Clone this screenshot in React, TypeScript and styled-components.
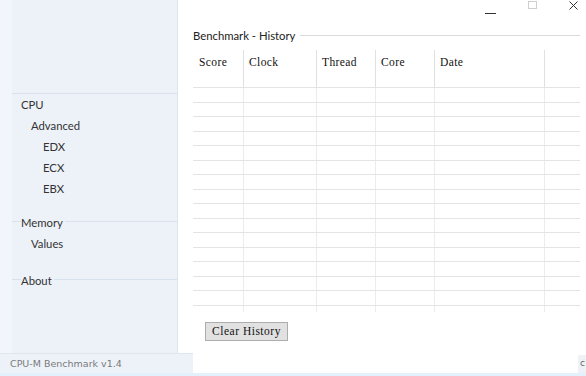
import React from 'react';
import styled, { createGlobalStyle } from 'styled-components';

const GlobalStyle = createGlobalStyle`
  html, body {
    margin: 0;
    padding: 0;
    background: #ffffff;
  }
  body {
    width: 586px;
    height: 376px;
    overflow: hidden;
    font-family: 'Segoe UI', Lato, 'Noto Sans', sans-serif;
  }
`;

interface NavItemProps {
  level: number;
}

interface GroupProps {
  gap: number;
}

const columns = [
  { label: 'Score', width: 51 },
  { label: 'Clock', width: 73 },
  { label: 'Thread', width: 59 },
  { label: 'Core', width: 59 },
  { label: 'Date', width: 110 },
  { label: '', width: 35 },
];

const ROWS = 15;

const App = () => {
  return (
    <Frame>
      <GlobalStyle />
      <Main>
        <Sidebar>
          <Panel>
            <Divider />
            <NavItem level={0}>CPU</NavItem>
            <NavItem level={1}>Advanced</NavItem>
            <NavItem level={2}>EDX</NavItem>
            <NavItem level={2}>ECX</NavItem>
            <NavItem level={2}>EBX</NavItem>
            <GroupTitle gap={13}>
              <span>Memory</span>
            </GroupTitle>
            <NavItem level={1}>Values</NavItem>
            <GroupTitle gap={16}>
              <span>About</span>
            </GroupTitle>
          </Panel>
        </Sidebar>
        <Content>
          <Controls>
            <svg width='11' height='16' viewBox='0 0 11 16'>
              <line x1='0' y1='13.5' x2='11' y2='13.5' stroke='#333' strokeWidth='1' />
            </svg>
            <svg width='9' height='16' viewBox='0 0 9 16'>
              <rect x='0.5' y='1.5' width='8' height='7' fill='none' stroke='#cfcfcf' strokeWidth='1' />
            </svg>
            <svg width='9' height='16' viewBox='0 0 9 16'>
              <path d='M0.5 1.5 L8.5 9.5 M8.5 1.5 L0.5 9.5' stroke='#333' strokeWidth='1' fill='none' />
            </svg>
          </Controls>
          <Legend>
            <span>Benchmark - History</span>
            <LegendLine />
          </Legend>
          <Grid>
            <HeadRow>
              {columns.map((c, i) => (
                <HeadCell key={i} style={{ width: c.width }}>
                  {c.label}
                </HeadCell>
              ))}
            </HeadRow>
            {Array.from({ length: ROWS + 1 }).map((_, r) => (
              <Row key={r} last={r === ROWS}>
                {columns.map((c, i) => (
                  <Cell key={i} style={{ width: c.width }} />
                ))}
              </Row>
            ))}
          </Grid>
          <ClearButton type='button'>Clear History</ClearButton>
        </Content>
      </Main>
      <StatusBar>
        <StatusLeft>CPU-M Benchmark v1.4</StatusLeft>
        <StatusFill />
        <StatusCorner>c</StatusCorner>
      </StatusBar>
      <BottomEdge />
    </Frame>
  );
};

const Frame = styled.div`
  width: 586px;
  height: 376px;
  display: grid;
  grid-template-rows: 353px 20px 3px;
  background: #ffffff;
`;

const Main = styled.div`
  display: flex;
  min-height: 0;
`;

const Sidebar = styled.aside`
  width: 178px;
  flex-shrink: 0;
  box-sizing: border-box;
  background: #f2f5fb;
  border-right: 1px solid #dce4ef;
  padding-left: 12px;
`;

const Panel = styled.div`
  height: 100%;
  background: #edf2f9;
  padding-top: 93px;
  box-sizing: border-box;
`;

const Divider = styled.div`
  height: 1px;
  background: #d8e1ee;
`;

const NavItem = styled.div<NavItemProps>`
  height: 21px;
  line-height: 21px;
  font-size: 11.3px;
  color: #333333;
  padding-left: ${({ level }) => [9, 19, 31][level]}px;
`;

const GroupTitle = styled.div<GroupProps>`
  position: relative;
  margin-top: ${({ gap }) => gap}px;
  height: 21px;
  line-height: 21px;
  font-size: 11.3px;
  color: #333333;
  padding-left: 9px;

  &::before {
    content: '';
    position: absolute;
    left: 0;
    right: 0;
    top: 9px;
    height: 1px;
    background: #d8e1ee;
  }

  span {
    position: relative;
    background: #edf2f9;
    padding-right: 2px;
  }
`;

const Content = styled.main`
  flex: 1;
  display: flex;
  flex-direction: column;
  padding: 0 6px 0 15px;
  min-width: 0;
`;

const Controls = styled.div`
  height: 16px;
  display: flex;
  justify-content: flex-end;
  gap: 32px;
  padding-right: 2px;
`;

const Legend = styled.div`
  margin-top: 12px;
  height: 14px;
  display: flex;
  align-items: center;
  gap: 5px;
  font-size: 11.3px;
  color: #222222;
  white-space: nowrap;
`;

const LegendLine = styled.div`
  flex: 1;
  height: 1px;
  background: #d9d9d9;
`;

const Grid = styled.div`
  margin-top: 8px;
  display: flex;
  flex-direction: column;
  font-family: 'Liberation Serif', serif;
`;

const HeadRow = styled.div`
  display: flex;
  height: 37px;
`;

const HeadCell = styled.div`
  box-sizing: border-box;
  padding: 6px 0 0 6px;
  font-size: 11.5px;
  letter-spacing: 0.4px;
  line-height: 12px;
  color: #111111;
  border-right: 1px solid #e0e0e0;

  &:nth-child(n + 2) {
    padding-left: 5px;
  }
  &:last-child {
    border-right: none;
  }
`;

const Row = styled.div<{ last: boolean }>`
  display: flex;
  height: ${({ last }) => (last ? 7 : 14.53)}px;
  box-sizing: border-box;
  border-top: 1px solid #e4e4e4;
`;

const Cell = styled.div`
  box-sizing: border-box;
  border-right: 1px solid #ececec;

  &:last-child {
    border-right: none;
  }
`;

const ClearButton = styled.button`
  align-self: flex-start;
  margin: 10px 0 0 12px;
  width: 83px;
  height: 19px;
  padding: 0;
  background: #e1e1e1;
  border: 1px solid #adadad;
  border-radius: 0;
  font-family: 'Liberation Serif', serif;
  font-size: 11.5px;
  letter-spacing: 0.5px;
  color: #111111;
`;

const StatusBar = styled.footer`
  display: flex;
`;

const StatusLeft = styled.div`
  width: 193px;
  box-sizing: border-box;
  background: #edf2f9;
  border-top: 1px solid #dfe6f0;
  padding-left: 10px;
  font-family: 'DejaVu Sans', sans-serif;
  font-size: 9.5px;
  line-height: 19px;
  color: #7a7a7a;
`;

const StatusFill = styled.div`
  flex: 1;
`;

const StatusCorner = styled.div`
  width: 8px;
  margin-top: 2px;
  background: #eef1f5;
  padding-left: 2px;
  box-sizing: border-box;
  font-family: 'DejaVu Sans', sans-serif;
  font-size: 9px;
  line-height: 17px;
  color: #666666;
  overflow: hidden;
`;

const BottomEdge = styled.div`
  background: #e2f1fb;
`;

export default App;
